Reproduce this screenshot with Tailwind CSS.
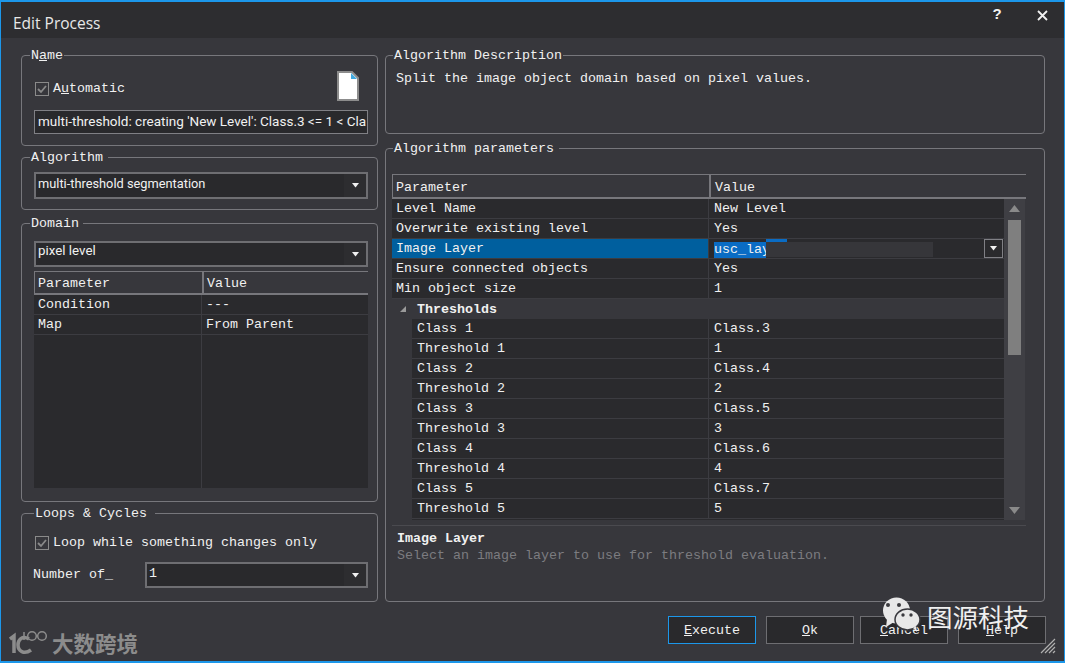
<!DOCTYPE html>
<html lang="en">
<head>
<meta charset="utf-8">
<script src="https://cdn.jsdelivr.net/npm/@tailwindcss/browser@4"></script>
<title>Edit Process</title>
</head>
<body class="m-0 overflow-hidden bg-[#37373c]">
<div class="relative w-[1065px] h-[663px] overflow-hidden flex flex-col bg-[#37373c] border-x border-[#1c97ea] border-t-2 border-b-2 font-['Liberation_Mono',monospace] text-[13.33px] leading-[16px] text-[#f1f1f1]">
  <!-- title bar -->
  <div class="h-[36px] shrink-0 bg-[#2d2d30] flex items-center pl-[12px] font-['Open_Sans',sans-serif] text-[15.5px] text-[#e8e8e8]">
    <span class="flex-1 pt-[6px]">Edit Process</span>
    <span class="w-[20px] text-center font-['Liberation_Sans',sans-serif] font-bold text-[15px] mr-[30px] text-[#f1f1f1] mb-[13px]">?</span>
    <svg class="mr-[16px] mb-[9px]" width="11" height="11" viewBox="0 0 11 11"><path d="M1 1 L10 10 M10 1 L1 10" stroke="#f1f1f1" stroke-width="1.8" fill="none"/></svg>
  </div>

  <div class="flex pl-[20px] pt-[8px] gap-[7px]">
    <!-- left column -->
    <div class="w-[357px] flex flex-col">
      <fieldset class="h-[100px] border border-[#77777c] rounded-[4px]">
        <legend class="ml-[8px] px-[1px] pt-[2px] leading-[16px]">N<u>a</u>me</legend>
        <div class="pl-[12px] pr-[9px]">
          <div class="h-[46px] flex items-start">
            <span class="mt-[17px] flex items-center">
              <span class="w-[14px] h-[14px] ml-[1px] border border-[#8a8a8a] flex items-center justify-center"><svg width="10" height="10" viewBox="0 0 10 10"><path d="M1 5 L4 8 L9 2" stroke="#8a8a8a" stroke-width="1.8" fill="none"/></svg></span>
              <span class="ml-[4px]">A<u>u</u>tomatic</span>
            </span>
            <svg class="ml-auto mr-[9px] mt-[7px]" width="22" height="30" viewBox="0 0 22 30"><path d="M1 1 H15 L21 7 V29 H1 Z" fill="#ffffff" stroke="#8c8c8c" stroke-width="2"/><path d="M14 2 L20 8 H14 Z" fill="#3fa9e0"/></svg>
          </div>
          <div class="h-[24px] border border-[#808085] bg-[#29292c] pl-[3px] font-['Roboto',sans-serif] text-[13.5px] leading-[21px] overflow-hidden whitespace-nowrap">multi-threshold: creating 'New Level': Class.3 &lt;= 1 &lt; Cla</div>
        </div>
      </fieldset>

      <fieldset class="mt-[2px] h-[62px] border border-[#77777c] rounded-[4px]">
        <legend class="ml-[8px] px-[1px] pt-[2px] pr-[5px] leading-[16px]">Algorithm</legend>
        <div class="pl-[12px] pr-[9px] pt-[6px]">
          <div class="h-[27px] border-2 border-[#6e6e72] bg-[#29292c] flex items-center pl-[2px] font-['Roboto',sans-serif] text-[12.8px]">
            <span class="flex-1 pb-[4px]">multi-threshold segmentation</span>
            <span class="w-[22px] h-full bg-[#2d2d30] flex items-center justify-center"><svg width="7" height="5" viewBox="0 0 7 5"><path d="M0 0 H7 L3.5 4.5 Z" fill="#f1f1f1"/></svg></span>
          </div>
        </div>
      </fieldset>

      <fieldset class="mt-[4px] h-[288px] border border-[#77777c] rounded-[4px]">
        <legend class="ml-[8px] px-[1px] pt-[2px] pr-[4px] leading-[16px]">Domain</legend>
        <div class="pl-[12px] pr-[9px] pt-[9px]">
          <div class="h-[26px] border-2 border-[#6e6e72] bg-[#29292c] flex items-center pl-[2px] font-['Roboto',sans-serif] text-[13.33px]">
            <span class="flex-1 pb-[6px]">pixel level</span>
            <span class="w-[22px] h-full bg-[#2d2d30] flex items-center justify-center"><svg width="7" height="5" viewBox="0 0 7 5"><path d="M0 0 H7 L3.5 4.5 Z" fill="#f1f1f1"/></svg></span>
          </div>
          <div class="mt-[4px] h-[24px] flex border-t border-b-2 border-l border-[#77777c]">
            <div class="w-[169px] border-r-2 border-[#77777c] pl-[3px] leading-[24px]">Parameter</div>
            <div class="pl-[3px] leading-[24px]">Value</div>
          </div>
          <div class="h-[193px] bg-[#2a2a2d] flex flex-col">
            <div class="h-[20px] shrink-0 flex border-b border-[#3c3c41] leading-[19px]"><div class="w-[168px] border-r border-[#3c3c41] pl-[4px]">Condition</div><div class="pl-[4px]">---</div></div>
            <div class="h-[20px] shrink-0 flex border-b border-[#3c3c41] leading-[19px]"><div class="w-[168px] border-r border-[#3c3c41] pl-[4px]">Map</div><div class="pl-[4px]">From Parent</div></div>
            <div class="flex-1 flex"><div class="w-[168px] border-r border-[#3c3c41]"></div></div>
          </div>
        </div>
      </fieldset>

      <fieldset class="mt-[2px] h-[98px] border border-[#77777c] rounded-[4px]">
        <legend class="ml-[12px] px-[1px] pt-[2px] pr-[8px] leading-[16px]">Loops &amp; Cycles</legend>
        <div class="pl-[12px] pr-[9px]">
          <div class="h-[15px] mt-[13px] flex items-center">
            <span class="w-[14px] h-[14px] ml-[1px] border border-[#8a8a8a] flex items-center justify-center"><svg width="10" height="10" viewBox="0 0 10 10"><path d="M1 5 L4 8 L9 2" stroke="#8a8a8a" stroke-width="1.8" fill="none"/></svg></span>
            <span class="ml-[4px]">Loop while something changes only</span>
          </div>
          <div class="mt-[12px] flex items-center">
            <span class="w-[112px] -ml-[1px]">Number of_</span>
            <div class="w-[223px] h-[26px] border-2 border-[#6e6e72] bg-[#29292c] flex items-center pl-[2px]">
              <span class="flex-1 pb-[3px]">1</span>
              <span class="w-[22px] h-full bg-[#2d2d30] flex items-center justify-center"><svg width="7" height="5" viewBox="0 0 7 5"><path d="M0 0 H7 L3.5 4.5 Z" fill="#f1f1f1"/></svg></span>
            </div>
          </div>
        </div>
      </fieldset>
    </div>

    <!-- right column -->
    <div class="w-[660px] flex flex-col">
      <fieldset class="h-[88px] border border-[#77777c] rounded-[4px]">
        <legend class="ml-[7px] px-[1px] pt-[2px] leading-[16px]">Algorithm Description</legend>
        <div class="pl-[10px] pt-[7px] leading-[16px]">Split the image object domain based on pixel values.</div>
      </fieldset>

      <fieldset class="mt-[5px] h-[463px] border border-[#77777c] rounded-[4px]">
        <legend class="ml-[7px] px-[1px] pt-[2px] pr-[5px] leading-[16px]">Algorithm parameters</legend>
        <div class="pl-[6px] pr-[18px] pt-[17px]">
          <div class="h-[25px] flex border-t border-b-2 border-l border-[#77777c]">
            <div class="w-[318px] border-r-2 border-[#77777c] pl-[3px] leading-[25px]">Parameter</div>
            <div class="pl-[4px] leading-[25px]">Value</div>
          </div>
          <div class="flex h-[321px] overflow-hidden">
            <div class="w-[612px] bg-[#2a2a2d] flex flex-col leading-[19px]">
              <div class="h-[20px] shrink-0 flex border-b border-[#3c3c41]"><div class="w-[317px] border-r border-[#3c3c41] pl-[4px]">Level Name</div><div class="pl-[5px]">New Level</div></div>
              <div class="h-[20px] shrink-0 flex border-b border-[#3c3c41]"><div class="w-[317px] border-r border-[#3c3c41] pl-[4px]">Overwrite existing level</div><div class="pl-[5px]">Yes</div></div>
              <div class="h-[20px] shrink-0 flex border-b border-[#3c3c41]">
                <div class="w-[317px] bg-[#005f9e] border-r border-[#3c3c41] pl-[4px]">Image Layer</div>
                <div class="flex-1 flex items-center pl-[5px]">
                  <span class="flex h-[19px] items-end"><span class="w-[52px] h-[16px] bg-[#0a6cc4] leading-[16px] overflow-hidden whitespace-nowrap">usc_lay</span></span>
                  <span class="flex flex-col w-[167px] h-[19px]"><span class="w-[21px] h-[3px] bg-[#0a6cc4]"></span><span class="h-[15px] bg-[#36363a]"></span></span>
                  <span class="ml-auto mr-[1px] w-[19px] h-[19px] border border-[#808085] flex items-center justify-center"><svg width="7" height="5" viewBox="0 0 7 5"><path d="M0 0 H7 L3.5 4.5 Z" fill="#f1f1f1"/></svg></span>
                </div>
              </div>
              <div class="h-[20px] shrink-0 flex border-b border-[#3c3c41]"><div class="w-[317px] border-r border-[#3c3c41] pl-[4px]">Ensure connected objects</div><div class="pl-[5px]">Yes</div></div>
              <div class="h-[20px] shrink-0 flex border-b border-[#3c3c41]"><div class="w-[317px] border-r border-[#3c3c41] pl-[4px]">Min object size</div><div class="pl-[5px]">1</div></div>
              <div class="h-[20px] shrink-0 flex items-center bg-[#37373c]">
                <svg class="ml-[7px]" width="8" height="8" viewBox="0 0 8 8"><path d="M7 1 V7 H1 Z" fill="#9a9a9a"/></svg>
                <span class="ml-[10px] font-bold">Thresholds</span>
              </div>
              <div class="flex-1 bg-[#37373c] pl-[20px] flex flex-col">
                <div class="h-[20px] shrink-0 flex border-b border-[#3c3c41] bg-[#2a2a2d]"><div class="w-[297px] border-r border-[#3c3c41] pl-[5px]">Class 1</div><div class="pl-[5px]">Class.3</div></div>
                <div class="h-[20px] shrink-0 flex border-b border-[#3c3c41] bg-[#2a2a2d]"><div class="w-[297px] border-r border-[#3c3c41] pl-[5px]">Threshold 1</div><div class="pl-[5px]">1</div></div>
                <div class="h-[20px] shrink-0 flex border-b border-[#3c3c41] bg-[#2a2a2d]"><div class="w-[297px] border-r border-[#3c3c41] pl-[5px]">Class 2</div><div class="pl-[5px]">Class.4</div></div>
                <div class="h-[20px] shrink-0 flex border-b border-[#3c3c41] bg-[#2a2a2d]"><div class="w-[297px] border-r border-[#3c3c41] pl-[5px]">Threshold 2</div><div class="pl-[5px]">2</div></div>
                <div class="h-[20px] shrink-0 flex border-b border-[#3c3c41] bg-[#2a2a2d]"><div class="w-[297px] border-r border-[#3c3c41] pl-[5px]">Class 3</div><div class="pl-[5px]">Class.5</div></div>
                <div class="h-[20px] shrink-0 flex border-b border-[#3c3c41] bg-[#2a2a2d]"><div class="w-[297px] border-r border-[#3c3c41] pl-[5px]">Threshold 3</div><div class="pl-[5px]">3</div></div>
                <div class="h-[20px] shrink-0 flex border-b border-[#3c3c41] bg-[#2a2a2d]"><div class="w-[297px] border-r border-[#3c3c41] pl-[5px]">Class 4</div><div class="pl-[5px]">Class.6</div></div>
                <div class="h-[20px] shrink-0 flex border-b border-[#3c3c41] bg-[#2a2a2d]"><div class="w-[297px] border-r border-[#3c3c41] pl-[5px]">Threshold 4</div><div class="pl-[5px]">4</div></div>
                <div class="h-[20px] shrink-0 flex border-b border-[#3c3c41] bg-[#2a2a2d]"><div class="w-[297px] border-r border-[#3c3c41] pl-[5px]">Class 5</div><div class="pl-[5px]">Class.7</div></div>
                <div class="h-[20px] shrink-0 flex border-b border-[#3c3c41] bg-[#2a2a2d]"><div class="w-[297px] border-r border-[#3c3c41] pl-[5px]">Threshold 5</div><div class="pl-[5px]">5</div></div>
                <div class="flex-1 bg-[#2a2a2d]"></div>
              </div>
            </div>
            <div class="w-[21px] bg-[#3f3f44] flex flex-col items-center">
              <svg class="mt-[6px] shrink-0" width="11" height="7" viewBox="0 0 11 7"><path d="M5.5 0 L11 7 H0 Z" fill="#8a8a8a"/></svg>
              <div class="mt-[8px] w-[13px] h-[135px] shrink-0 bg-[#7f7f7f]"></div>
              <svg class="mt-[152px] shrink-0" width="11" height="7" viewBox="0 0 11 7"><path d="M5.5 7 L11 0 H0 Z" fill="#8a8a8a"/></svg>
            </div>
          </div>
          <div class="mt-[5px] border-t border-[#4a4a4f] pt-[4px] pl-[5px]">
            <div class="font-bold leading-[17px]">Image Layer</div>
            <div class="text-[#7c7c80] leading-[17px]">Select an image layer to use for threshold evaluation.</div>
          </div>
        </div>
      </fieldset>
    </div>
  </div>

  <!-- buttons -->
  <div class="flex pl-[667px] pt-[14px] leading-[28px] text-center">
    <div class="w-[88px] h-[28px] border border-[#1c97ea] bg-[#29292c]"><u>E</u>xecute</div>
    <div class="ml-[10px] w-[88px] h-[28px] border border-[#6e6e72] bg-[#29292c]"><u>O</u>k</div>
    <div class="ml-[6px] w-[88px] h-[28px] border border-[#6e6e72] bg-[#29292c]"><u>C</u>ancel</div>
    <div class="ml-[10px] w-[88px] h-[28px] border border-[#6e6e72] bg-[#29292c]"><u>H</u>elp</div>
  </div>

  <!-- resize grip -->
  <svg class="absolute right-[8px] bottom-[7px]" width="16" height="16" viewBox="0 0 16 16"><path d="M1 15 L15 1 M5 15 L15 5 M9 15 L15 9 M13 15 L15 13" stroke="#b0b0b0" stroke-width="1.2" fill="none"/></svg>

  <!-- watermark: bottom left logo -->
  <div class="absolute left-[8px] bottom-[5px] flex items-center text-[#8c8c8c]">
    <svg width="42" height="26" viewBox="0 0 42 26"><path d="M1 9 L5 6 V23" stroke="#8c8c8c" stroke-width="3.5" fill="none"/><path d="M20 9 C13 5 9 10 9 15 C9 21 15 25 22 20" stroke="#8c8c8c" stroke-width="3.5" fill="none"/><path d="M15 2 V10" stroke="#8c8c8c" stroke-width="1.5" fill="none"/><circle cx="23" cy="6" r="4.3" stroke="#8c8c8c" stroke-width="1.5" fill="none"/><circle cx="33" cy="6" r="4.3" stroke="#8c8c8c" stroke-width="1.5" fill="none"/></svg>
    <span class="ml-[1px] font-['Noto_Sans_CJK_SC',sans-serif] font-bold text-[21.5px] leading-[24px]">大数跨境</span>
  </div>

  <!-- watermark: wechat -->
  <div class="absolute left-[879px] top-[594px] flex items-center">
    <svg width="42" height="38" viewBox="0 0 42 38">
      <ellipse cx="16.5" cy="14.5" rx="13.5" ry="13" fill="#e8e8e8"/>
      <path d="M7 23 L6 31 L14 26 Z" fill="#e8e8e8"/>
      <ellipse cx="27.5" cy="23.5" rx="12.5" ry="10.5" fill="#e8e8e8" stroke="#37373c" stroke-width="1.5"/>
      <path d="M33 32 L37 36 L36 30 Z" fill="#e8e8e8"/>
      <circle cx="8" cy="9" r="2" fill="#3a3a3e"/><circle cx="19" cy="9" r="2" fill="#3a3a3e"/>
      <circle cx="23" cy="19" r="1.7" fill="#3a3a3e"/><circle cx="31" cy="19" r="1.7" fill="#3a3a3e"/>
    </svg>
    <span class="ml-[5px] mt-[2px] font-['Noto_Sans_CJK_SC',sans-serif] text-[25.5px] leading-[32px] text-[#f0f0f0]">图源科技</span>
  </div>
</div>
</body>
</html>
